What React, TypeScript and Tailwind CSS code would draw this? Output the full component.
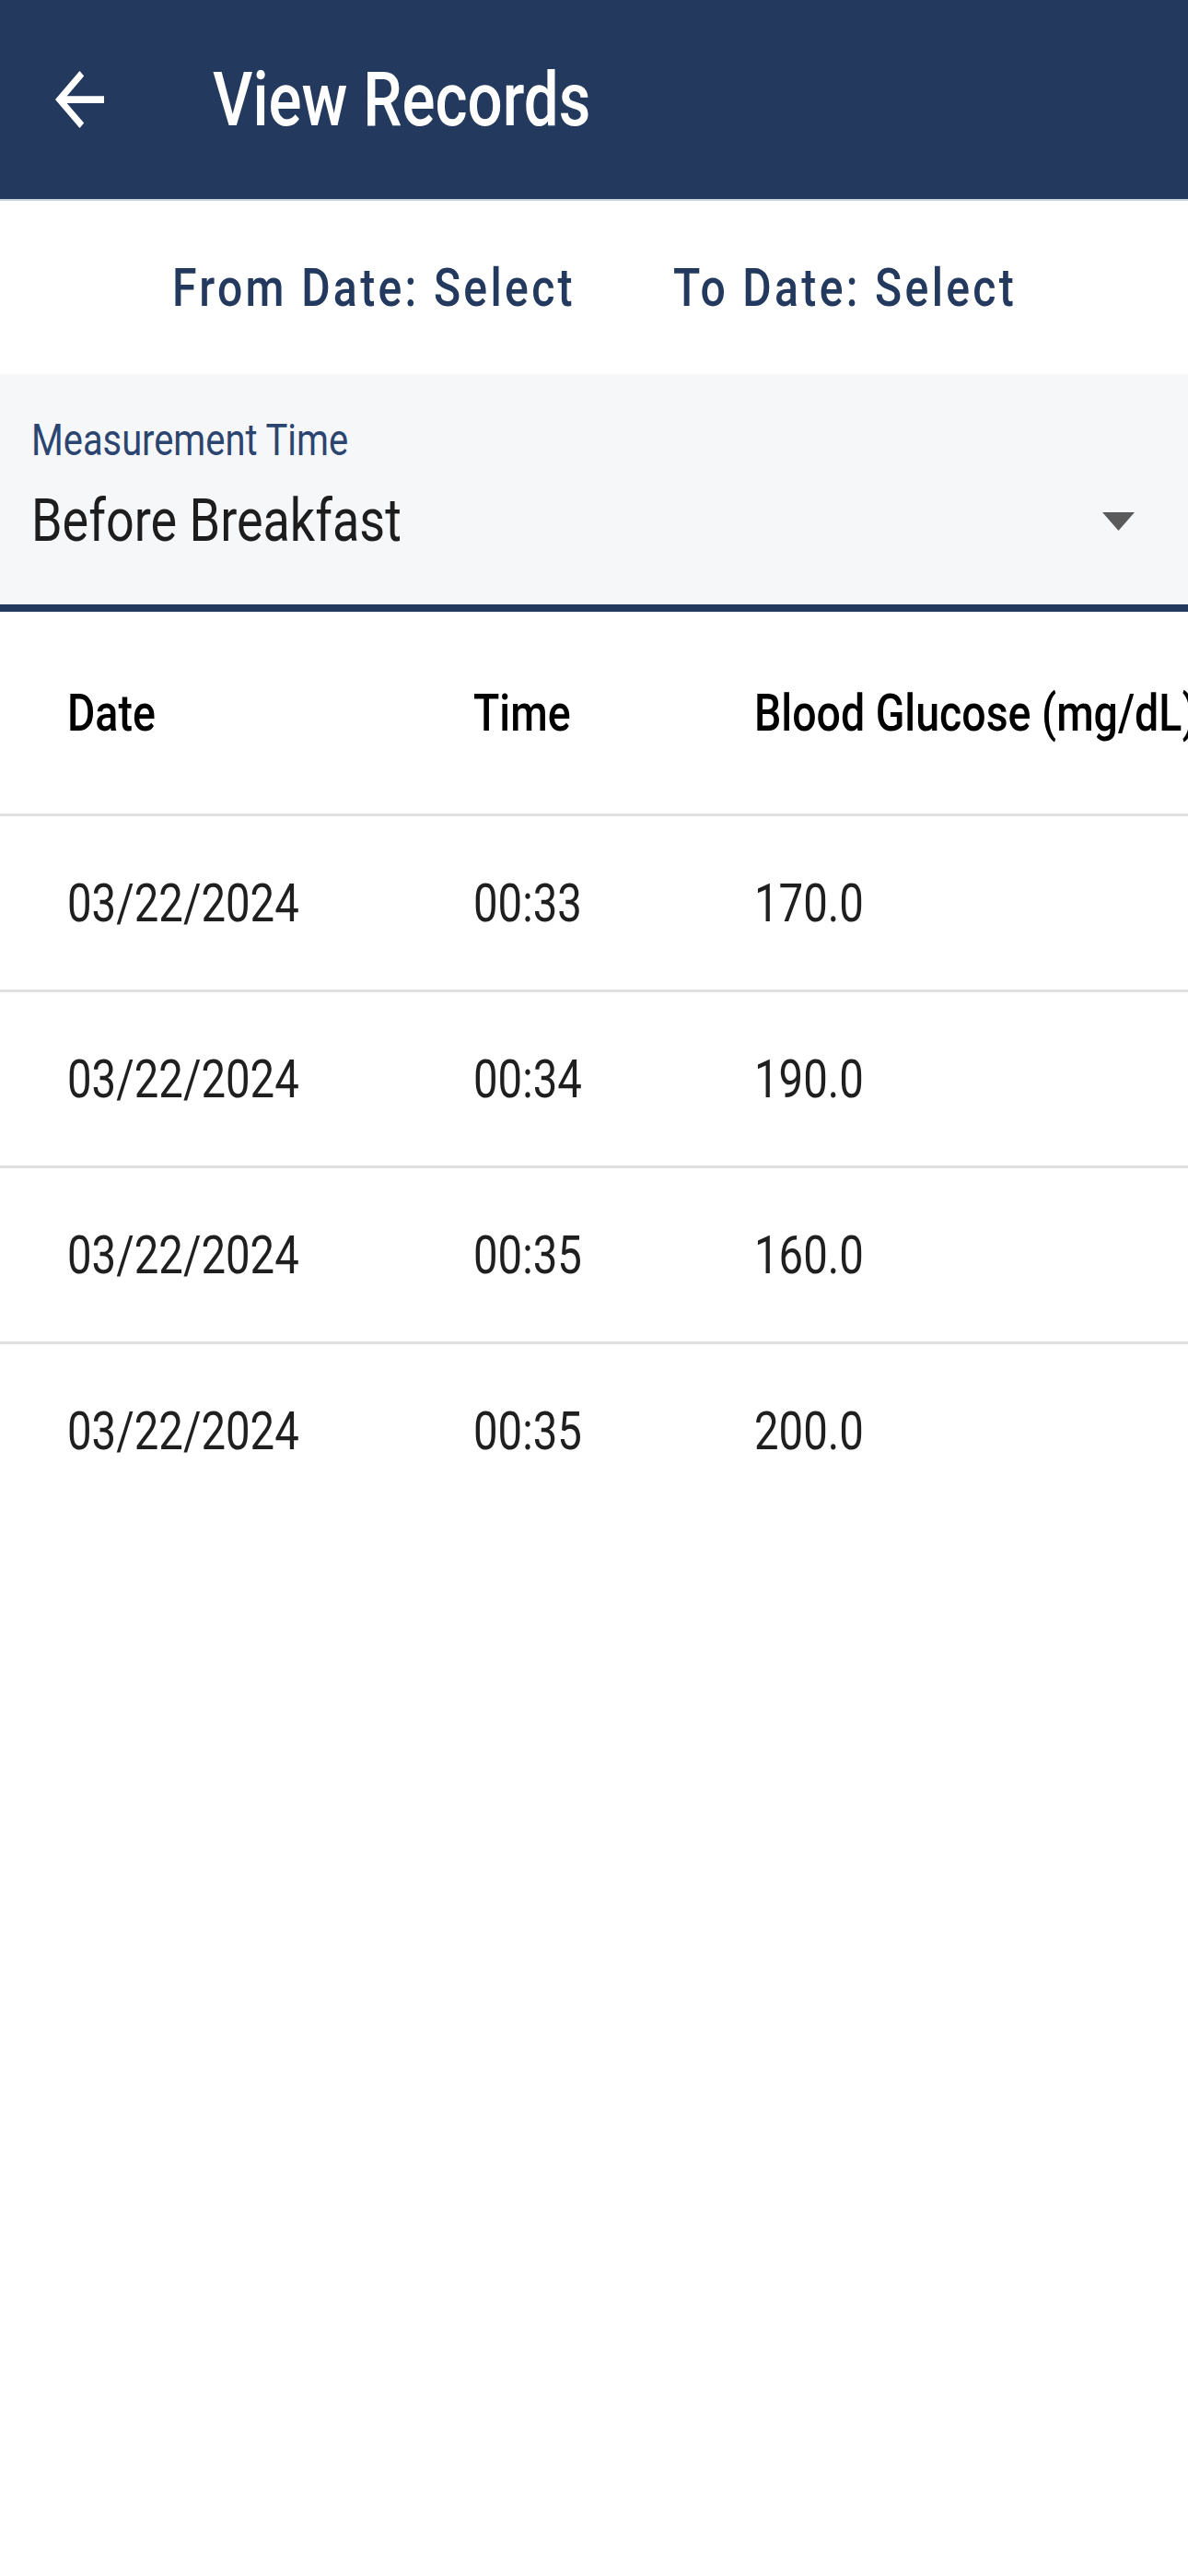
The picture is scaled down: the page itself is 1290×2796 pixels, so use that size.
const records = [
  { date: '03/22/2024', time: '00:33', value: '170.0' },
  { date: '03/22/2024', time: '00:34', value: '190.0' },
  { date: '03/22/2024', time: '00:35', value: '160.0' },
  { date: '03/22/2024', time: '00:35', value: '200.0' },
]

// the app font is a condensed Roboto; squeeze the regular face horizontally
const narrow = 'inline-block whitespace-nowrap origin-left scale-x-[0.83]'

function BackArrow() {
  return (
    <svg width="53" height="62" viewBox="4 4 16 16" preserveAspectRatio="none" fill="#ffffff">
      <path d="M20 11H7.83l5.59-5.59L12 4l-8 8 8 8 1.41-1.41L7.83 13H20v-2z" />
    </svg>
  )
}

function Cell({ width, children, head }: { width?: string; children: string; head?: boolean }) {
  return (
    <div className={`${width ?? ''} shrink-0`}>
      <span
        className={`${narrow} leading-none ${
          head ? 'text-[56px] font-medium text-black' : 'text-[57px] text-[#1f1f1f]'
        }`}
      >
        {children}
      </span>
    </div>
  )
}

export default function App() {
  return (
    <div className="w-[1290px] h-[2796px] overflow-hidden bg-white font-[Roboto,sans-serif]">
      {/* top app bar */}
      <div className="flex items-center h-[218px] bg-[#233a5e] border-b-2 border-[#c9d3e0]">
        <div className="ml-[60px] shrink-0">
          <BackArrow />
        </div>
        <span className={`${narrow} ml-[118px] text-[81px] font-medium leading-none text-white`}>
          View Records
        </span>
      </div>

      {/* date range */}
      <div className="flex items-center h-[188px] pl-[187px]">
        <div className="w-[544px] shrink-0">
          <span className={`${narrow} text-[58px] font-medium leading-none tracking-[4px] text-[#233a5e]`}>
            From Date: Select
          </span>
        </div>
        <div>
          <span className={`${narrow} text-[58px] font-medium leading-none tracking-[4px] text-[#233a5e]`}>
            To Date: Select
          </span>
        </div>
      </div>

      {/* measurement time select */}
      <div className="bg-[#f6f7f9] h-[258px] pt-[48px] pl-[34px] pr-[58px] border-b-[8px] border-[#233a5e]">
        <span className={`${narrow} text-[48px] leading-none text-[#2b4570]`}>Measurement Time</span>
        <div className="flex items-center justify-between mt-[31px]">
          <span className={`${narrow} text-[65px] leading-none text-[#1d1d1d]`}>Before Breakfast</span>
          <svg width="35" height="20" viewBox="0 0 35 20" className="shrink-0">
            <path d="M0 0h35L17.5 20z" fill="#5a5a5a" />
          </svg>
        </div>
      </div>

      {/* table */}
      <div className="overflow-hidden">
        <div className="flex items-center h-[219px] pl-[73px]">
          <Cell width="w-[441px]" head>Date</Cell>
          <Cell width="w-[305px]" head>Time</Cell>
          <Cell head>Blood Glucose (mg/dL)</Cell>
        </div>
        {records.map((r, i) => (
          <div key={i} className="border-t-[3px] border-[#e0e0e0]">
            <div className="flex items-center h-[188px] pl-[73px]">
              <Cell width="w-[441px]">{r.date}</Cell>
              <Cell width="w-[305px]">{r.time}</Cell>
              <Cell>{r.value}</Cell>
            </div>
          </div>
        ))}
      </div>
    </div>
  )
}
